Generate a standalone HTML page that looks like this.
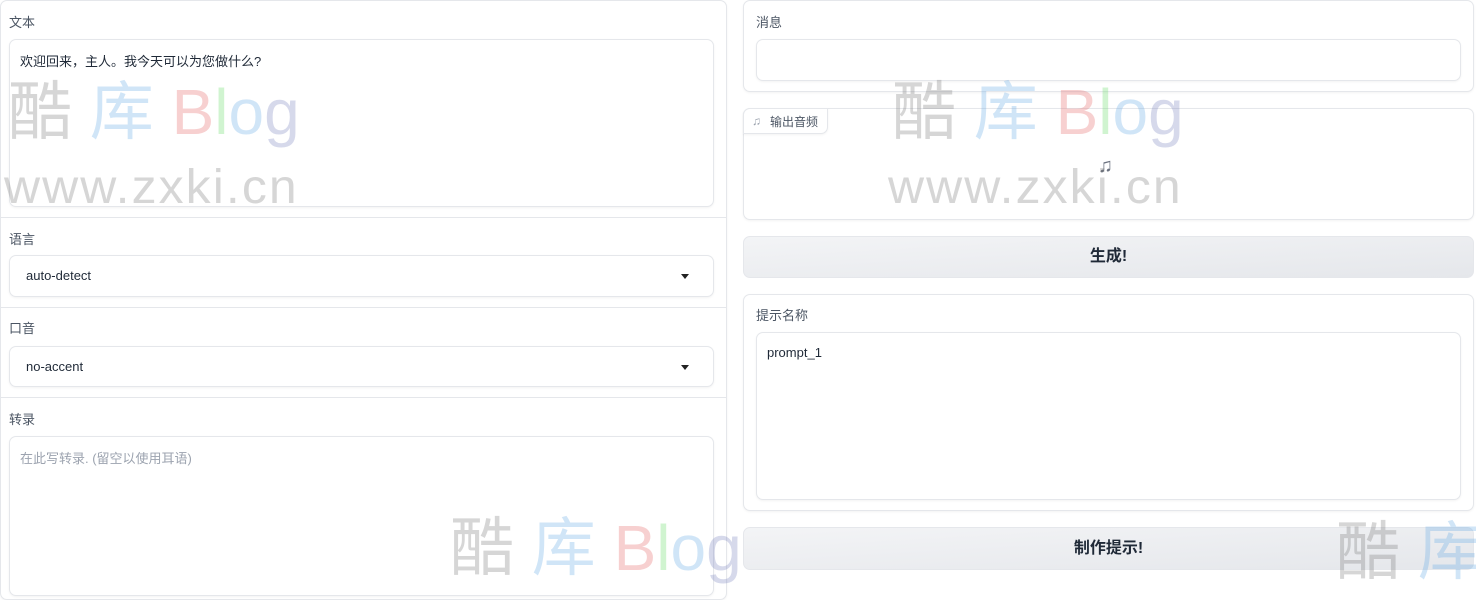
<!DOCTYPE html>
<html><head><meta charset="utf-8"><style>
*{box-sizing:border-box;margin:0;padding:0}
body{width:1476px;height:573px;overflow:hidden;background:#fff;font-family:"Liberation Sans","Noto Sans CJK SC",sans-serif;font-size:13px;color:#1f2937;position:relative}
.abs{position:absolute}
.lbl{position:absolute;font-size:13px;color:#4b5563}
.box{position:absolute;border:1px solid #e5e7eb;border-radius:7px;background:#fff;box-shadow:0 1px 2px rgba(0,0,0,.05)}
.hr{position:absolute;left:0;width:726px;height:1px;background:#e5e7eb}
.arrow{position:absolute;right:24px;top:18px;width:0;height:0;border-left:4px solid transparent;border-right:4px solid transparent;border-top:5px solid #222}
.btn{position:absolute;border:1px solid #e5e7eb;border-radius:7px;background:linear-gradient(to bottom right,#f3f4f6,#e5e7eb);font-size:16px;font-weight:bold;color:#1f2937;text-align:center}
.wm{position:absolute;font-family:"Liberation Sans","Noto Sans CJK SC",sans-serif;line-height:1;white-space:nowrap}
.wm .a{color:rgba(120,120,120,.3)}
.wm .b{color:rgba(100,170,230,.3)}
.wm .B{color:rgba(230,100,100,.3)}
.wm .l{color:rgba(100,220,100,.3)}
.wm .o{color:rgba(100,170,230,.3)}
.wm .g{color:rgba(120,130,190,.3)}
.url{position:absolute;font-size:48px;color:rgba(120,120,120,.3);line-height:1;letter-spacing:2px;transform:scaleX(1.04);transform-origin:left}
</style></head><body>
<div class="box" style="left:0;top:0;width:727px;height:600px;border-radius:7px"></div>
<div class="lbl" style="left:9px;top:12px">文本</div>
<div class="box" style="left:9px;top:39px;width:705px;height:168px"></div>
<div class="abs" style="left:20px;top:51px;font-size:13px;color:#1f2937">欢迎回来，主人。我今天可以为您做什么?</div>
<div class="hr" style="top:217px"></div>
<div class="lbl" style="left:9px;top:229px">语言</div>
<div class="box" style="left:9px;top:255px;width:705px;height:42px"><span class="abs" style="left:16px;top:12px">auto-detect</span><div class="arrow"></div></div>
<div class="hr" style="top:307px"></div>
<div class="lbl" style="left:9px;top:318px">口音</div>
<div class="box" style="left:9px;top:346px;width:705px;height:41px"><span class="abs" style="left:16px;top:12px">no-accent</span><div class="arrow"></div></div>
<div class="hr" style="top:397px"></div>
<div class="lbl" style="left:9px;top:409px">转录</div>
<div class="box" style="left:9px;top:436px;width:705px;height:160px"><span class="abs" style="left:10px;top:11px;color:#9ca3af">在此写转录. (留空以使用耳语)</span></div>

<div class="box" style="left:743px;top:0;width:731px;height:92px"></div>
<div class="lbl" style="left:756px;top:12px">消息</div>
<div class="box" style="left:756px;top:39px;width:705px;height:42px"></div>
<div class="box" style="left:743px;top:108px;width:731px;height:112px"></div>
<div class="box" style="left:743px;top:108px;width:85px;height:26px;border-radius:7px 0 7px 0"><span class="abs" style="left:8px;top:5px;font-size:12px;color:#9ca3af">♫</span><span class="abs" style="left:26px;top:4px;font-size:12px;color:#4b5563">输出音频</span></div>
<div class="abs" style="left:1098px;top:155px;font-size:20px;color:#6b7280">♫</div>
<div class="btn" style="left:743px;top:236px;width:731px;height:42px;line-height:40px">生成!</div>
<div class="box" style="left:743px;top:294px;width:731px;height:217px"></div>
<div class="lbl" style="left:756px;top:305px">提示名称</div>
<div class="box" style="left:756px;top:332px;width:705px;height:168px"><span class="abs" style="left:10px;top:12px">prompt_1</span></div>
<div class="btn" style="left:743px;top:527px;width:731px;height:43px;line-height:42px">制作提示!</div>

<div class="wm" style="left:8px;top:80px;font-size:64px"><span class="a">酷</span> <span class="b">库</span> <span class="B">B</span><span class="l">l</span><span class="o">o</span><span class="g">g</span></div>
<div class="url" style="left:4px;top:164px">www.zxki.cn</div>
<div class="wm" style="left:892px;top:80px;font-size:64px"><span class="a">酷</span> <span class="b">库</span> <span class="B">B</span><span class="l">l</span><span class="o">o</span><span class="g">g</span></div>
<div class="url" style="left:888px;top:164px">www.zxki.cn</div>
<div class="wm" style="left:450px;top:516px;font-size:64px"><span class="a">酷</span> <span class="b">库</span> <span class="B">B</span><span class="l">l</span><span class="o">o</span><span class="g">g</span></div>
<div class="wm" style="left:1336px;top:520px;font-size:64px"><span class="a">酷</span> <span class="b">库</span></div>
</body></html>
